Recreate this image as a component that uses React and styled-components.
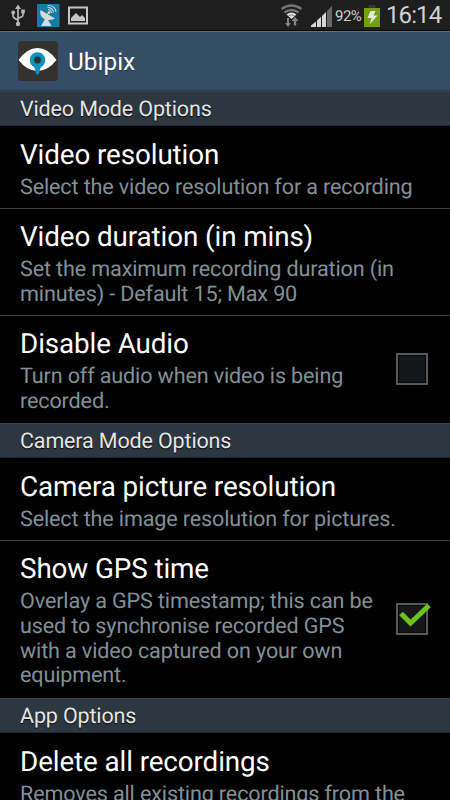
import React from "react";
import { useState } from "react";
import styled, { createGlobalStyle } from "styled-components";

const GlobalStyle = createGlobalStyle`
  body {
    margin: 0;
    background: #000;
    font-family: Roboto, "Liberation Sans", sans-serif;
    text-rendering: geometricPrecision;
  }
`;

const Screen = styled.main`
  display: flex;
  flex-direction: column;
  width: 450px;
  height: 800px;
  overflow: hidden;
  background: #000;
`;

const StatusBar = styled.div`
  display: flex;
  flex: none;
  justify-content: space-between;
  box-sizing: border-box;
  height: 31px;
  padding: 0 8px 0 11px;
  background: #1e1e1e;
  border-bottom: 1px solid #060606;
`;

const StatusIcons = styled.svg`
  display: block;
  flex: none;
`;

const StatusGroup = styled.div`
  display: flex;
  align-items: flex-start;
`;

const BatteryLevel = styled.span`
  width: 29px;
  margin-left: 3px;
  color: #cfcfcf;
  font-size: 15px;
  line-height: 33px;
  letter-spacing: -0.5px;
  white-space: nowrap;
`;

const Clock = styled.span`
  width: 56px;
  margin-left: 6px;
  color: #d0d0d0;
  font-size: 24px;
  line-height: 31px;
  letter-spacing: -0.9px;
  white-space: nowrap;
`;

const ActionBar = styled.header`
  display: flex;
  flex: none;
  align-items: center;
  gap: 10px;
  box-sizing: border-box;
  height: 60px;
  padding-left: 18px;
  background: #354d66;
  border-top: 1px solid #5d7389;
  border-bottom: 1px solid #283c50;
`;

const AppName = styled.h1`
  margin: 0;
  padding-top: 2px;
  color: #fff;
  font-size: 24.4px;
  font-weight: 400;
  line-height: 30px;
  text-shadow: 0 1px 1px rgba(0, 0, 0, 0.4);
`;

const SectionTitle = styled.h2`
  flex: none;
  box-sizing: border-box;
  height: 35px;
  margin: 0;
  padding-left: 20px;
  border-top: 1px solid #37444f;
  border-bottom: 1px solid #1d262d;
  background: #2d3740;
  color: #e6e6e6;
  font-size: 21.5px;
  font-weight: 400;
  line-height: 36px;
  letter-spacing: -0.15px;
  text-shadow: 0 1px 1px #000;
`;

const Row = styled.div`
  display: flex;
  flex: none;
  align-items: center;
  justify-content: space-between;
  box-sizing: border-box;
  height: ${props => props.$height}px;
  padding: 0 22px 0 20px;
  border-bottom: ${props => (props.$last ? "none" : "1px solid #414141")};
`;

const RowText = styled.div`
  align-self: flex-start;
  padding-top: ${props => (props.$first ? 11 : 10)}px;
  white-space: pre;
`;

const RowTitle = styled.h3`
  margin: 0;
  color: #fff;
  font-size: 27.8px;
  font-weight: 400;
  line-height: 35px;
  letter-spacing: -0.1px;
`;

const Summary = styled.p`
  margin: 4px 0 0;
  color: #819096;
  font-size: 21.6px;
  line-height: 24.8px;
  letter-spacing: -0.15px;
`;

const CheckButton = styled.button`
  display: block;
  flex: none;
  width: 32px;
  height: 32px;
  margin-bottom: 2px;
  padding: 0;
  border: 2px solid #565a59;
  background: #15171b;
  box-shadow: inset 0 0 1px 1px #060708;
`;

const CheckMark = styled.svg`
  display: block;
  overflow: visible;
`;

const Notifications = () => (
  <StatusIcons width="78" height="30" viewBox="11 0 78 30">
    <g fill="none" stroke="#b7b7b7" strokeWidth="1.7">
      <path d="M18 8v16M13 13v3q0 2 5 4M23 12v3q0 2-5 3" />
    </g>
    <g fill="#b7b7b7">
      <path d="M18 4.5l3 4.5h-6z" />
      <circle cx="13.2" cy="12.5" r="1.9" />
      <path d="M21.2 9.5h3.6v3.8h-3.6z" />
      <circle cx="18" cy="24" r="2.2" />
    </g>
    <path d="M37 4h22.5v23H37z" fill="#147da3" />
    <g fill="#d9d9d9">
      <path d="M40.500 10q-1.500 5 3 8.500 4.500 3 11.500 0z" />
      <path d="M45 19l-4 7h10.500l-2-3.500-2-3.500z" />
      <circle cx="49" cy="12.500" r="1.300" />
    </g>
    <g fill="none" stroke="#d9d9d9" strokeWidth="1.1">
      <path d="M46 16l3-3.500M48 9.500q3 0 3.500 3.500M47.500 7.500q5.500 0 6 5M47.500 5.500q8 0 8.500 6.500" />
    </g>
    <path d="M69 7.500h18v16H69z" fill="none" stroke="#c6c6c6" strokeWidth="2" />
    <path d="M71 21v-3l5-5 4 4 2-2 3 3v3z" fill="#c6c6c6" />
  </StatusIcons>
);

const Connectivity = () => (
  <StatusIcons width="52" height="30" viewBox="279 0 52 30">
    <g fill="none" stroke="#747474" strokeWidth="2.5">
      <path d="M280.500 9q10-7 20 0" />
      <path d="M283.500 12.500q7-5 14 0" />
    </g>
    <path d="M285.500 14.500q5-4 10 0l-5 4.500z" fill="#e0e0e0" />
    <path d="M287.500 15.800q3-2 6 0" fill="none" stroke="#666" strokeWidth="0.8" />
    <path d="M287 27l-3-4h2v-5h2v5h2zM294 17l3.500 4h-2.300v4.500h-2.400V21h-2.300z" fill="#858585" />
    <path d="M310 27v-1.500l5-4V27zM316 27v-6.500l4-3.700V27zM321 27V16l4-4v15z" fill="#d6d6d6" />
    <path d="M326 27V11l5-5v21z" fill="#676767" />
  </StatusIcons>
);

const Battery = () => (
  <StatusIcons width="16" height="30" viewBox="364 0 16 30">
    <path d="M368.500 5h7v3h-7z" fill="#343a2d" />
    <path d="M364 8h16v19h-16z" fill="#74a00c" />
    <path d="M370.500 11h5l-2 4.500h4l-8 9 2-6.500h-4z" fill="#e5e8df" />
  </StatusIcons>
);

const AppLogo = () => (
  <StatusIcons width="40" height="40" viewBox="0 0 40 40">
    <rect width="40" height="40" rx="3.500" fill="#33322f" />
    <path d="M.5 19Q9 7 19.500 7T38.500 19Q30 30 19.500 30T.5 19z" fill="#fff" />
    <circle cx="19.500" cy="19" r="7.800" fill="#0d91bd" />
    <path d="M13 23q4.500 3 4.700 9 1.800 3.500 3.600 0 .2-6 4.700-9z" fill="#0d91bd" />
    <circle cx="19.500" cy="19" r="3.400" fill="#2d2e2e" />
  </StatusIcons>
);

const Checkbox = ({ label, initial }) => {
  const [checked, setChecked] = useState(initial);
  return (
    <CheckButton
      role="checkbox"
      aria-label={label}
      aria-checked={checked}
      onClick={() => setChecked(!checked)}
    >
      {checked && (
        <CheckMark width="28" height="28" viewBox="0 0 28 28">
          <path
            d="M3 8.500l9.500 9.500L31 .5"
            fill="none"
            stroke="#6cc51b"
            strokeWidth="5"
          />
        </CheckMark>
      )}
    </CheckButton>
  );
};

const sections = [
  {
    title: "Video Mode Options",
    rows: [
      {
        title: "Video resolution",
        summary: "Select the video resolution for a recording",
        height: 83
      },
      {
        title: "Video duration (in mins)",
        summary:
          "Set the maximum recording duration (in\nminutes) - Default 15; Max 90",
        height: 107
      },
      {
        title: "Disable Audio",
        summary: "Turn off audio when video is being\nrecorded.",
        height: 107,
        checked: false
      }
    ]
  },
  {
    title: "Camera Mode Options",
    rows: [
      {
        title: "Camera picture resolution",
        summary: "Select the image resolution for pictures.",
        height: 83
      },
      {
        title: "Show GPS time",
        summary:
          "Overlay a GPS timestamp; this can be\nused to synchronise recorded GPS\nwith a video captured on your own\nequipment.",
        height: 157,
        checked: true
      }
    ]
  },
  {
    title: "App Options",
    rows: [
      {
        title: "Delete all recordings",
        summary: "Removes all existing recordings from the",
        height: 83
      }
    ]
  }
];

const App = () => (
  <Screen>
    <GlobalStyle />
    <StatusBar>
      <Notifications />
      <StatusGroup>
        <Connectivity />
        <BatteryLevel>92%</BatteryLevel>
        <Battery />
        <Clock>16:14</Clock>
      </StatusGroup>
    </StatusBar>
    <ActionBar>
      <AppLogo />
      <AppName>Ubipix</AppName>
    </ActionBar>
    {sections.map(section => (
      <React.Fragment key={section.title}>
        <SectionTitle>{section.title}</SectionTitle>
        {section.rows.map((row, index) => (
          <Row
            key={row.title}
            $height={row.height}
            $last={index === section.rows.length - 1}
          >
            <RowText $first={index === 0}>
              <RowTitle>{row.title}</RowTitle>
              <Summary>{row.summary}</Summary>
            </RowText>
            {row.checked !== undefined && (
              <Checkbox label={row.title} initial={row.checked} />
            )}
          </Row>
        ))}
      </React.Fragment>
    ))}
  </Screen>
);

export default App;
